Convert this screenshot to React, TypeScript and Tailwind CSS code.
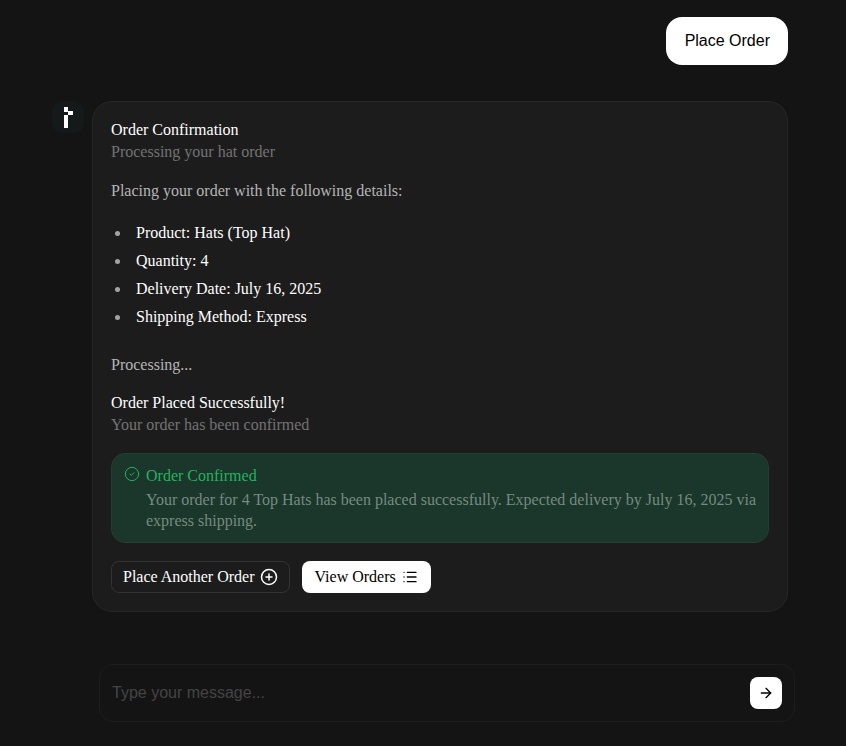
import { ArrowRight, CircleCheck, CirclePlus, List } from "lucide-react";

const serif = "font-['Liberation_Serif',serif]";
const items = ["Product: Hats (Top Hat)", "Quantity: 4", "Delivery Date: July 16, 2025", "Shipping Method: Express"];

export default function App() {
  return (
    <div className={`h-[746px] w-[846px] overflow-hidden bg-[#141414] ${serif}`}>
      <div className="flex justify-end pr-[58px] pt-[17px]">
        <div className="flex h-12 items-center rounded-2xl bg-white pl-[19px] pr-[18px] font-['Liberation_Sans',sans-serif] text-base text-black">
          Place Order
        </div>
      </div>
      <div className="mt-9 flex gap-2 pl-[52px] pr-[58px]">
        <div className="h-8 w-8 shrink-0 rounded-[10px] bg-[#161919] pl-3 pt-[6px]">
          <svg width="9" height="21" viewBox="0 0 9 21" shapeRendering="crispEdges" className="block">
            <path d="M0 0h4v5H0zM4 4h5v4H4zM0 8h4v13H0z" fill="#fff" />
          </svg>
        </div>
        <div className="h-[511px] flex-1 rounded-[20px] border border-[#272727] bg-[#1c1c1c] px-[18px] pt-[17px]">
          <div className="text-base leading-[22px] text-white">Order Confirmation</div>
          <div className="text-base leading-[22px] text-[#737373]">Processing your hat order</div>
          <p className="mt-[17px] text-base leading-[22px] text-[#b5b5b5]">Placing your order with the following details:</p>
          <ul className="mt-5 flex flex-col gap-[6px] pl-1 text-base leading-[22px] text-white">
            {items.map((t) => (
              <li key={t} className="flex items-center gap-[16px]">
                <span className="h-[5px] w-[5px] shrink-0 rounded-full bg-[#a3a3a3]" />
                {t}
              </li>
            ))}
          </ul>
          <p className="mt-[26px] text-base leading-[22px] text-[#b5b5b5]">Processing...</p>
          <div className="mt-4 text-base leading-[22px] text-white">Order Placed Successfully!</div>
          <div className="text-base leading-[22px] text-[#737373]">Your order has been confirmed</div>
          <div className="mt-[17px] flex h-[90px] gap-[6px] rounded-[14px] border border-[#22402f] bg-[#1b362a] pl-3 pr-2 pt-[11px]">
            <CircleCheck size={16} strokeWidth={1.5} className="mt-[1px] shrink-0 text-[#22b35e]" />
            <div>
              <div className="text-base leading-[22px] text-[#22b35e]">Order Confirmed</div>
              <div className="mt-[2px] text-base leading-[21px] text-[#758b80]">
                Your order for 4 Top Hats has been placed successfully. Expected delivery by July 16, 2025 via express shipping.
              </div>
            </div>
          </div>
          <div className="mt-[18px] flex gap-3">
            <div className="flex h-8 items-center gap-[5px] rounded-lg border border-[#333333] pl-[11px] pr-[11px] text-base text-white">
              Place Another Order
              <CirclePlus size={18} strokeWidth={2} />
            </div>
            <div className="flex h-8 items-center gap-[6px] rounded-lg bg-white px-[13px] text-base text-black">
              View Orders
              <List size={16} strokeWidth={2} />
            </div>
          </div>
        </div>
      </div>
      <div className="ml-[99px] mt-[52px] flex h-[58px] w-[696px] items-center justify-between rounded-[14px] border border-[#1e1e1e] pl-[12px] pr-[12px]">
        <span className="font-['Liberation_Sans',sans-serif] text-base text-[#444444]">Type your message...</span>
        <div className="flex h-8 w-8 items-center justify-center rounded-lg bg-white text-black">
          <ArrowRight size={16} strokeWidth={2} />
        </div>
      </div>
    </div>
  );
}
